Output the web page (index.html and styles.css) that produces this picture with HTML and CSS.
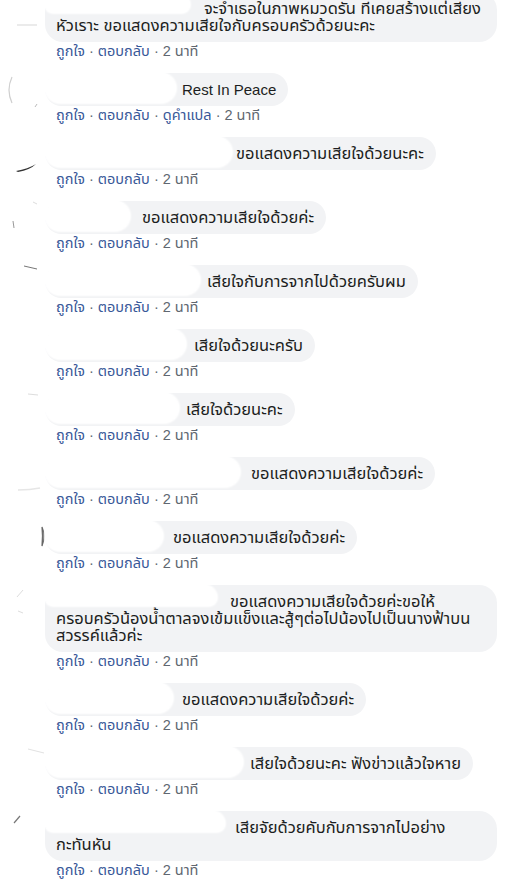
FILE: index.html
```html
<!DOCTYPE html>
<html>
<head>
<meta charset="UTF-8">
<title>ความคิดเห็น</title>
<link rel="stylesheet" href="styles.css">
</head>
<body>
<div class="list">

	<!-- 1 -->
	<div class="comment first">
		<div class="avatar"><svg width="32" height="32"><path d="M9 33 L29 33" stroke="#e4e4e4" stroke-width="1.5"/></svg></div>
		<div class="body">
			<div class="bubble long">
				<span class="hide" style="width: 145px;"></span>
				<p class="text" style="text-indent: 148px;">จะจำเธอในภาพหมวดรัน ที่เคยสร้างแต่เสียง<br>หัวเราะ ขอแสดงความเสียใจกับครอบครัวด้วยนะคะ</p>
			</div>
			<div class="actions"><a>ถูกใจ</a> · <a>ตอบกลับ</a> · <span>2 นาที</span></div>
		</div>
	</div>

	<!-- 2 -->
	<div class="comment">
		<div class="avatar"><svg width="32" height="34"><path d="M4 4 Q-2 17 4 30" stroke="#cfcfcf" stroke-width="1.2" fill="none"/><path d="M29 31 L27 34" stroke="#bbb" stroke-width="1"/></svg></div>
		<div class="body">
			<div class="bubble">
				<span class="hide" style="width: 131px;"></span>
				<p class="text latin" style="text-indent: 126px;">Rest In Peace</p>
			</div>
			<div class="actions"><a>ถูกใจ</a> · <a>ตอบกลับ</a> · <a>ดูคำแปล</a> · <span>2 นาที</span></div>
		</div>
	</div>

	<!-- 3 -->
	<div class="comment">
		<div class="avatar"><svg width="32" height="34"><path d="M8 34 Q20 32 28 27 Q22 33 10 35 Z" fill="#333"/></svg></div>
		<div class="body">
			<div class="bubble">
				<span class="hide" style="width: 187px;"></span>
				<p class="text" style="text-indent: 180px;">ขอแสดงความเสียใจด้วยนะคะ</p>
			</div>
			<div class="actions"><a>ถูกใจ</a> · <a>ตอบกลับ</a> · <span>2 นาที</span></div>
		</div>
	</div>

	<!-- 4 -->
	<div class="comment">
		<div class="avatar"><svg width="32" height="34"><path d="M5 20 L6 27" stroke="#999" stroke-width="1"/><path d="M25 1 L29 3" stroke="#ddd" stroke-width="1"/></svg></div>
		<div class="body">
			<div class="bubble">
				<span class="hide" style="width: 85px;"></span>
				<p class="text" style="text-indent: 86px;">ขอแสดงความเสียใจด้วยค่ะ</p>
			</div>
			<div class="actions"><a>ถูกใจ</a> · <a>ตอบกลับ</a> · <span>2 นาที</span></div>
		</div>
	</div>

	<!-- 5 -->
	<div class="comment">
		<div class="avatar"><svg width="32" height="34"><path d="M16 1 L29 4" stroke="#777" stroke-width="1"/></svg></div>
		<div class="body">
			<div class="bubble">
				<span class="hide" style="width: 155px;"></span>
				<p class="text" style="text-indent: 151px;">เสียใจกับการจากไปด้วยครับผม</p>
			</div>
			<div class="actions"><a>ถูกใจ</a> · <a>ตอบกลับ</a> · <span>2 นาที</span></div>
		</div>
	</div>

	<!-- 6 -->
	<div class="comment">
		<div class="avatar"></div>
		<div class="body">
			<div class="bubble">
				<span class="hide" style="width: 141px;"></span>
				<p class="text" style="text-indent: 138px;">เสียใจด้วยนะครับ</p>
			</div>
			<div class="actions"><a>ถูกใจ</a> · <a>ตอบกลับ</a> · <span>2 นาที</span></div>
		</div>
	</div>

	<!-- 7 -->
	<div class="comment">
		<div class="avatar"><svg width="32" height="34"><path d="M20 1 L30 2" stroke="#ddd" stroke-width="1"/></svg></div>
		<div class="body">
			<div class="bubble">
				<span class="hide" style="width: 134px;"></span>
				<p class="text" style="text-indent: 130px;">เสียใจด้วยนะคะ</p>
			</div>
			<div class="actions"><a>ถูกใจ</a> · <a>ตอบกลับ</a> · <span>2 นาที</span></div>
		</div>
	</div>

	<!-- 8 -->
	<div class="comment">
		<div class="avatar"><svg width="32" height="34"><path d="M10 33 Q22 33 32 31" stroke="#e6e6e6" stroke-width="1.5" fill="none"/></svg></div>
		<div class="body">
			<div class="bubble">
				<span class="hide" style="width: 195px;"></span>
				<p class="text" style="text-indent: 195px;">ขอแสดงความเสียใจด้วยค่ะ</p>
			</div>
			<div class="actions"><a>ถูกใจ</a> · <a>ตอบกลับ</a> · <span>2 นาที</span></div>
		</div>
	</div>

	<!-- 9 -->
	<div class="comment">
		<div class="avatar"><svg width="32" height="34"><path d="M34 6 Q38 15 34 25 Q35 15 34 6 Z" fill="#555" stroke="#666" stroke-width="1.2"/></svg></div>
		<div class="body">
			<div class="bubble">
				<span class="hide" style="width: 118px;"></span>
				<p class="text" style="text-indent: 117px;">ขอแสดงความเสียใจด้วยค่ะ</p>
			</div>
			<div class="actions"><a>ถูกใจ</a> · <a>ตอบกลับ</a> · <span>2 นาที</span></div>
		</div>
	</div>

	<!-- 10 -->
	<div class="comment">
		<div class="avatar"><svg width="32" height="34"><path d="M9 12 L15 5" stroke="#ddd" stroke-width="1"/><path d="M10 26 L15 28" stroke="#ddd" stroke-width="1"/></svg></div>
		<div class="body">
			<div class="bubble long">
				<span class="hide" style="width: 172px;"></span>
				<p class="text" style="text-indent: 174px;">ขอแสดงความเสียใจด้วยค่ะขอให้<br>ครอบครัวน้องน้ำตาลจงเข้มแข็งและสู้ๆต่อไปน้องไปเป็นนางฟ้าบน<br>สวรรค์แล้วค่ะ</p>
			</div>
			<div class="actions"><a>ถูกใจ</a> · <a>ตอบกลับ</a> · <span>2 นาที</span></div>
		</div>
	</div>

	<!-- 11 -->
	<div class="comment">
		<div class="avatar"></div>
		<div class="body">
			<div class="bubble">
				<span class="hide" style="width: 128px;"></span>
				<p class="text" style="text-indent: 126px;">ขอแสดงความเสียใจด้วยค่ะ</p>
			</div>
			<div class="actions"><a>ถูกใจ</a> · <a>ตอบกลับ</a> · <span>2 นาที</span></div>
		</div>
	</div>

	<!-- 12 -->
	<div class="comment">
		<div class="avatar"><svg width="32" height="34"><path d="M20 2 L36 6" stroke="#e2e2e2" stroke-width="1"/></svg></div>
		<div class="body">
			<div class="bubble">
				<span class="hide" style="width: 198px;"></span>
				<p class="text" style="text-indent: 194px;">เสียใจด้วยนะคะ ฟังข่าวแล้วใจหาย</p>
			</div>
			<div class="actions"><a>ถูกใจ</a> · <a>ตอบกลับ</a> · <span>2 นาที</span></div>
		</div>
	</div>

	<!-- 13 -->
	<div class="comment">
		<div class="avatar"><svg width="32" height="34"><path d="M6 12 L12 5" stroke="#777" stroke-width="1.2"/></svg></div>
		<div class="body">
			<div class="bubble long">
				<span class="hide" style="width: 180px;"></span>
				<p class="text" style="text-indent: 179px;">เสียจัยด้วยคับกับการจากไปอย่าง<br>กะทันหัน</p>
			</div>
			<div class="actions"><a>ถูกใจ</a> · <a>ตอบกลับ</a> · <span>2 นาที</span></div>
		</div>
	</div>

</div>
</body>
</html>
```

FILE: styles.css
```css
body
{
	margin: 0;
	background: #ffffff;
	font-family: "Liberation Sans", Arial, "Noto Sans Thai", Tahoma, sans-serif;
	color: #1c1e21;
	overflow: hidden;
}

.list
{
	display: flex;
	flex-direction: column;
	gap: 12px;
}

.comment
{
	display: flex;
	gap: 5px;
	padding-left: 8px;
}

.comment.first
{
	margin-top: -8px;
}

.avatar
{
	width: 32px;
	flex: none;
}

.avatar svg
{
	display: block;
	overflow: visible;
}

.body
{
	display: flex;
	flex-direction: column;
	align-items: flex-start;
}

.bubble
{
	position: relative;
	background: #f2f3f5;
	border-radius: 18px;
	padding: 8px 12px 8px 11px;
}

.bubble.long
{
	width: 452px;
	box-sizing: border-box;
}

.text
{
	margin: 0;
	font-size: 16.5px;
	line-height: 17px;
	white-space: nowrap;
}

.text.latin
{
	font-size: 15px;
}

/* ปิดชื่อ (white-out ทับชื่อผู้ใช้) */
.hide
{
	position: absolute;
	left: 0;
	top: 0;
	height: 30px;
	background: #ffffff;
	border-radius: 16px;
	box-shadow: 0 0 2px 1px #ffffff;
}

.bubble.long .hide
{
	height: 21px;
	border-radius: 16px 16px 10px 10px;
}

.actions
{
	padding-left: 11px;
	font-size: 14.5px;
	line-height: 19px;
	color: #606770;
}

.actions a
{
	color: #385898;
}
```
